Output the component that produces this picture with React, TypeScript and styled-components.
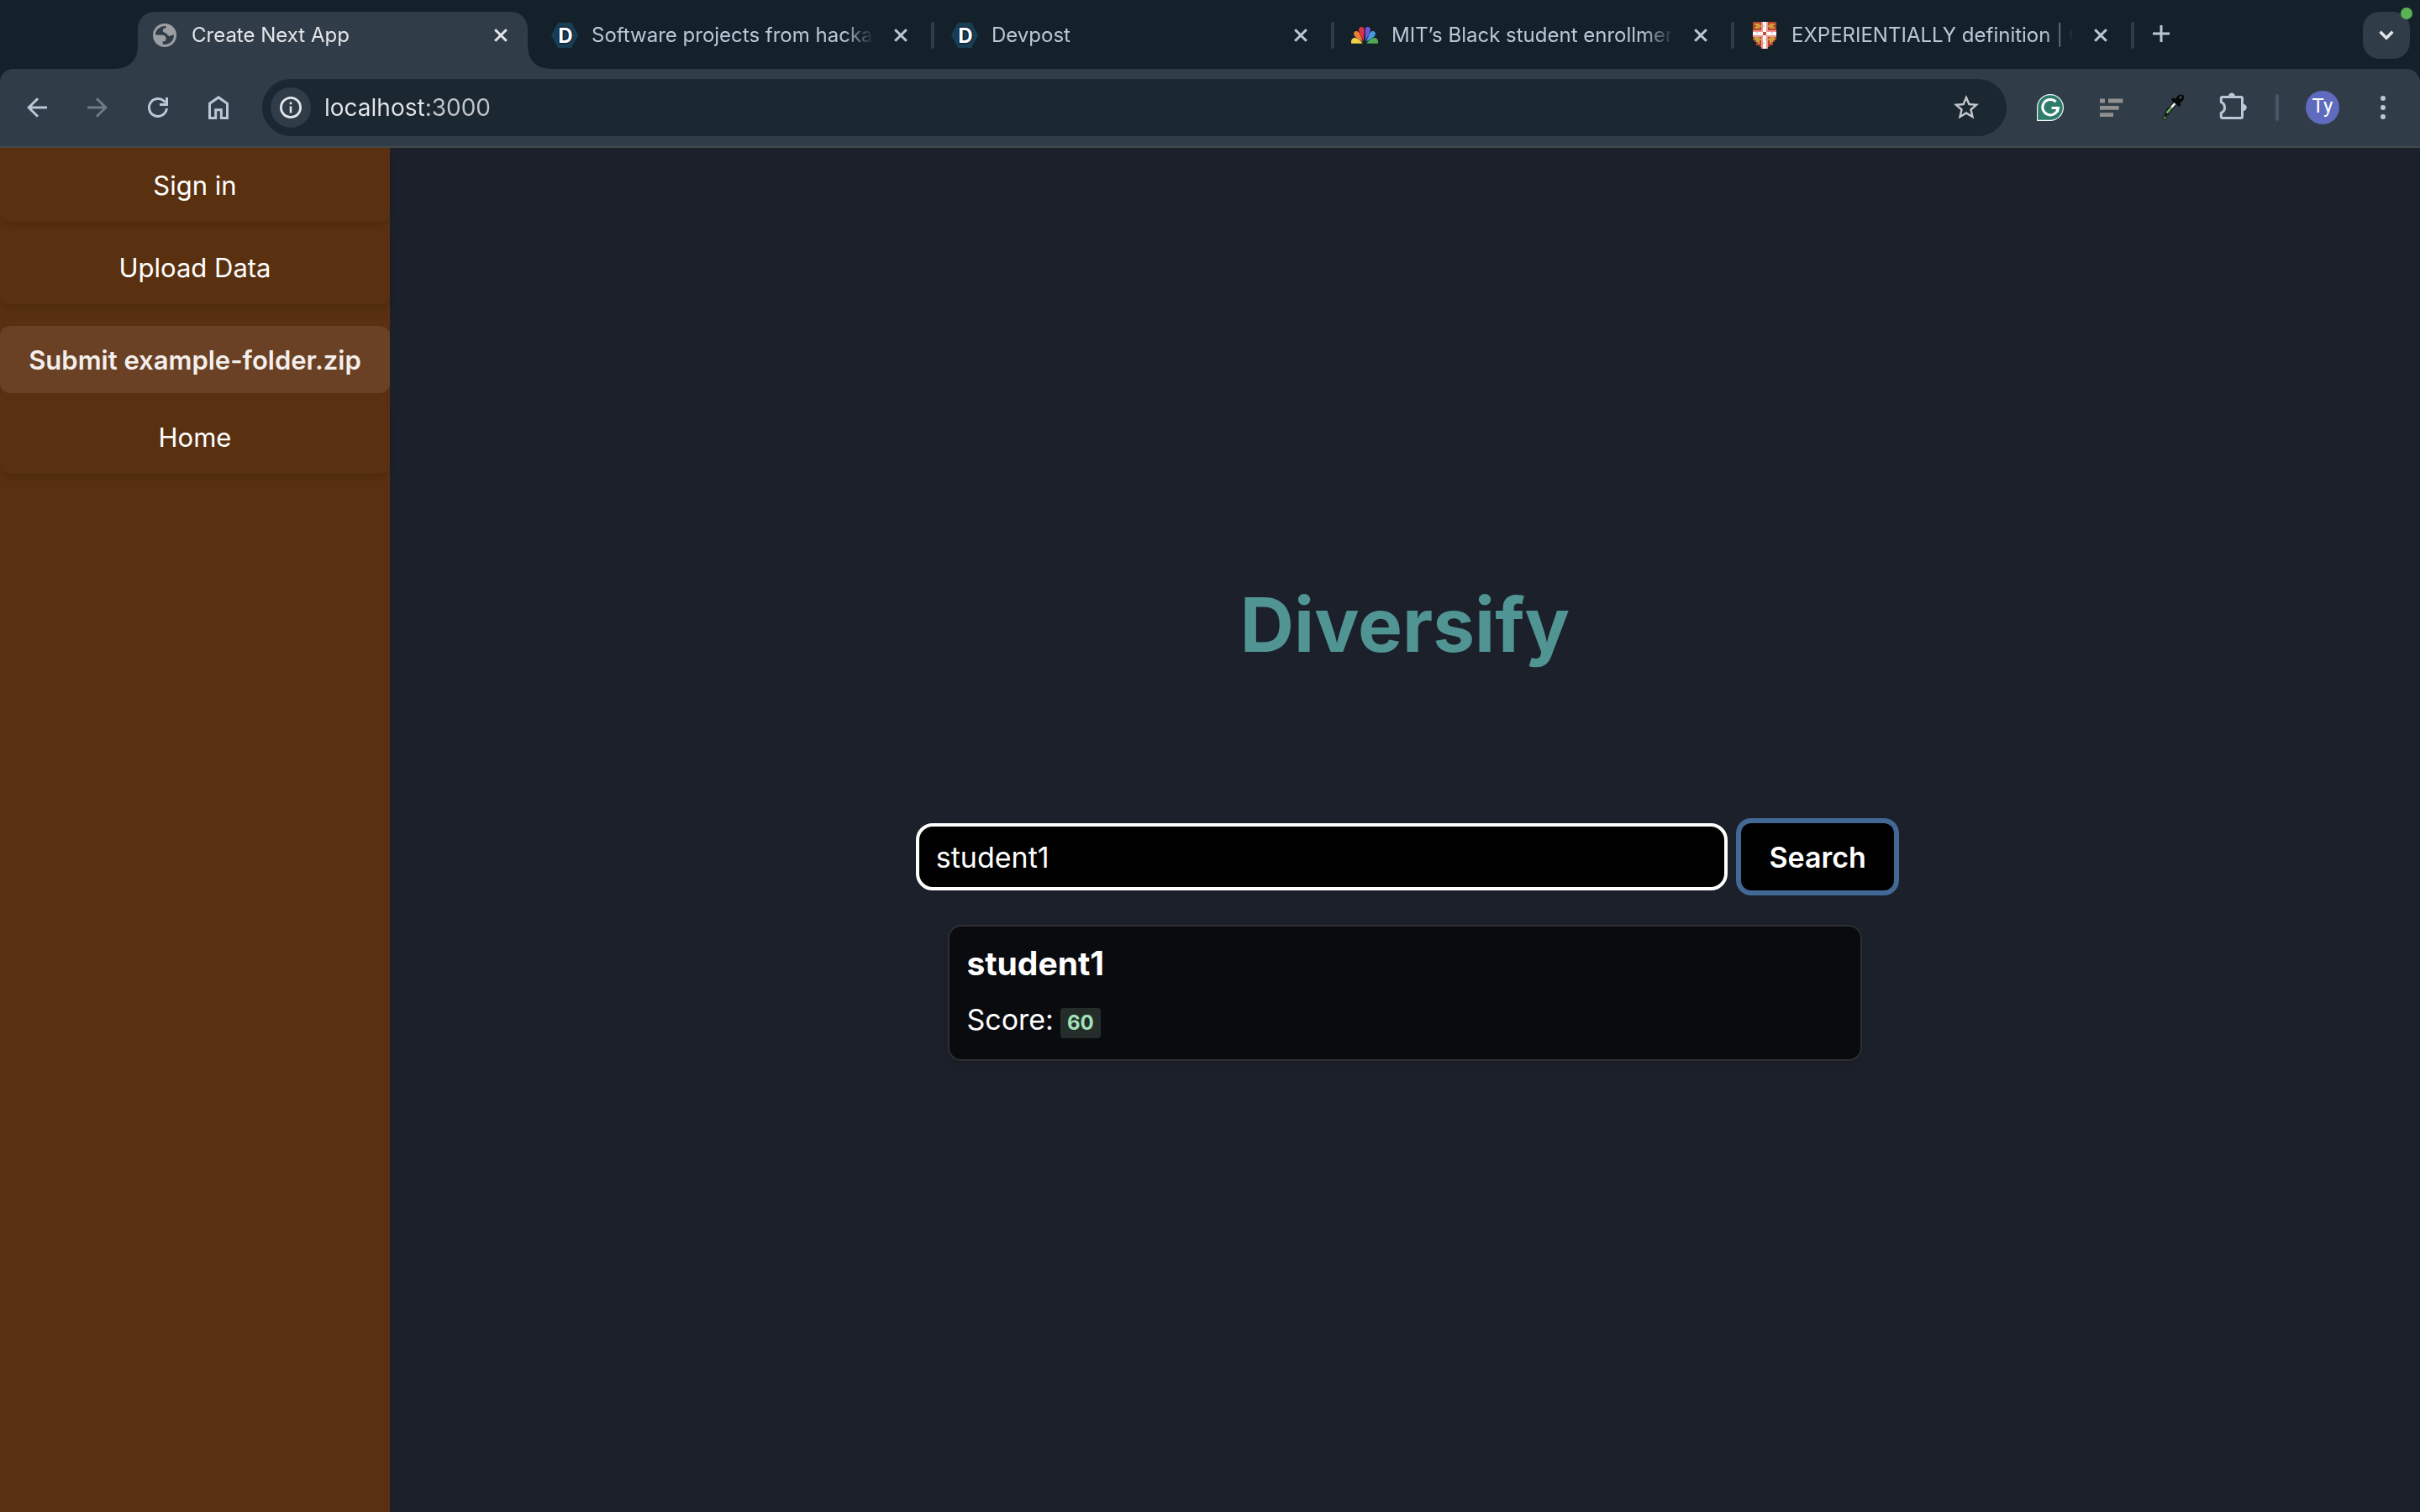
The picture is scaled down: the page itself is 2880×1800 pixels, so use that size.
import React, { useState } from "react";
import styled, { createGlobalStyle, css } from "styled-components";

const color = {
  strip: "#14212b",
  toolbar: "#303c48",
  field: "#1b2831",
  divider: "#43494c",
  icon: "#b8c8d6",
  bright: "#e3e5e8",
  page: "#1c202a",
  sidebar: "#5a3110",
  sidebarAction: "#6a4124",
  brand: "#509593",
  focus: "#426895",
};

const GlobalStyle = createGlobalStyle`
  *, *::before, *::after { box-sizing: border-box; }
  body {
    margin: 0;
    background: ${color.page};
    font-family: Inter, "Noto Sans", sans-serif;
    color: #fff;
  }
  button, input { font: inherit; color: inherit; }
  button { margin: 0; padding: 0; border: 0; background: none; cursor: pointer; }
  h1, h2, p { margin: 0; }
`;

const Window = styled.div`
  display: flex;
  flex-direction: column;
  min-height: 100vh;
`;

/* ---------- Tab strip ---------- */

const TabStrip = styled.header`
  display: flex;
  padding: 14px 12px 0 164px;
  background: ${color.strip};
`;

const TabList = styled.div`
  display: flex;
  flex: 1 1 auto;
  min-width: 0;
`;

const Tab = styled.div<{ $active?: boolean }>`
  position: relative;
  display: flex;
  align-items: center;
  gap: 16px;
  flex: 0 1 464px;
  min-width: 0;
  height: 68px;
  padding: 0 16px 12px;
  color: ${(p) => (p.$active ? color.bright : color.icon)};
  ${(p) =>
    p.$active &&
    css`
      background: ${color.toolbar};
      border-radius: 20px 20px 0 0;
      &::before,
      &::after {
        content: "";
        position: absolute;
        bottom: 0;
        width: 24px;
        height: 24px;
      }
      &::before {
        right: 100%;
        background: radial-gradient(circle at 0 0, transparent 23px, ${color.toolbar} 24px);
      }
      &::after {
        left: 100%;
        background: radial-gradient(circle at 100% 0, transparent 23px, ${color.toolbar} 24px);
      }
    `}
`;

const Favicon = styled.span`
  display: flex;
  align-items: center;
  justify-content: center;
  flex: 0 0 32px;
  height: 32px;
`;

const TabTitle = styled.button`
  flex: 1 1 auto;
  min-width: 0;
  overflow: hidden;
  text-align: left;
  white-space: nowrap;
  font-size: 24px;
  line-height: 32px;
  mask-image: linear-gradient(90deg, #000 calc(100% - 36px), transparent);
`;

const TabClose = styled.button`
  display: flex;
  align-items: center;
  justify-content: center;
  flex: 0 0 32px;
  height: 32px;
`;

const TabDivider = styled.span<{ $hidden?: boolean }>`
  flex: 0 0 4px;
  height: 32px;
  margin: 12px 4px 0;
  border-radius: 2px;
  background: ${(p) => (p.$hidden ? "transparent" : color.toolbar)};
`;

const NewTab = styled.button`
  display: flex;
  align-items: center;
  justify-content: center;
  flex: 0 0 56px;
  height: 56px;
  padding-bottom: 4px;
`;

const TabSearch = styled.button`
  position: relative;
  display: flex;
  align-items: center;
  justify-content: center;
  flex: 0 0 56px;
  height: 56px;
  border-radius: 20px;
  background: ${color.toolbar};
`;

const StatusDot = styled.span`
  position: absolute;
  top: -5px;
  right: -3px;
  width: 14px;
  height: 14px;
  border-radius: 50%;
  background: #5bb254;
`;

/* ---------- Toolbar ---------- */

const ToolbarBack = styled.div`
  background: ${color.strip};
`;

const Toolbar = styled.div`
  display: flex;
  align-items: center;
  padding: 12px 8px;
  border-bottom: 2px solid ${color.divider};
  border-radius: 16px 16px 0 0;
  background: ${color.toolbar};
`;

const ToolButton = styled.button<{ $dim?: boolean }>`
  display: flex;
  align-items: center;
  justify-content: center;
  flex: 0 0 72px;
  height: 68px;
  color: ${(p) => (p.$dim ? "#6f7b83" : color.icon)};
`;

const Omnibox = styled.form`
  display: flex;
  align-items: center;
  flex: 1 1 auto;
  min-width: 0;
  height: 68px;
  margin: 0 16px;
  padding: 0 12px 0 10px;
  border-radius: 34px;
  background: ${color.field};
`;

const SiteInfo = styled.button`
  display: flex;
  align-items: center;
  justify-content: center;
  flex: 0 0 48px;
  height: 48px;
  margin-right: 16px;
  border-radius: 50%;
  background: ${color.toolbar};
`;

const Address = styled.input`
  flex: 1 1 auto;
  min-width: 0;
  padding: 0;
  border: 0;
  outline: 0;
  font-size: 28px;
  line-height: 36px;
  background: linear-gradient(90deg, ${color.bright} 122px, #c3c6c9 122px);
  background-clip: text;
  -webkit-text-fill-color: transparent;
`;

const ToolDivider = styled.span`
  flex: 0 0 4px;
  height: 32px;
  margin: 0 16px;
  border-radius: 2px;
  background: #485765;
`;

const Avatar = styled.span`
  display: flex;
  align-items: center;
  justify-content: center;
  width: 40px;
  height: 40px;
  padding-bottom: 4px;
  border-radius: 50%;
  background: #5f6bbd;
  color: #fff;
  font-family: Roboto, sans-serif;
  font-size: 24px;
  line-height: 24px;
`;

/* ---------- Page ---------- */

const Page = styled.div`
  display: flex;
  flex: 1 1 auto;
`;

const Sidebar = styled.nav`
  display: flex;
  flex-direction: column;
  flex: 0 0 464px;
  background: ${color.sidebar};
`;

const NavLink = styled.a<{ $before?: number }>`
  display: flex;
  align-items: center;
  justify-content: center;
  height: 88px;
  margin-top: ${(p) => p.$before ?? 0}px;
  padding-top: 2px;
  border-radius: 12px;
  box-shadow: 0 8px 12px -2px rgba(0, 0, 0, 0.1), 0 4px 8px -2px rgba(0, 0, 0, 0.06);
  background: ${color.sidebar};
  color: #fff;
  font-size: 31px;
  line-height: 40px;
  text-decoration: none;
`;

const SubmitButton = styled.button`
  height: 80px;
  margin-top: 26px;
  padding-top: 2px;
  border-radius: 12px;
  background: ${color.sidebarAction};
  color: #f4efec;
  font-size: 31px;
  font-weight: 600;
  line-height: 40px;
`;

const Main = styled.main`
  display: flex;
  flex-direction: column;
  align-items: center;
  justify-content: center;
  flex: 1 1 auto;
  min-width: 0;
  padding-bottom: 27px;
`;

const Title = styled.h1`
  margin-bottom: 178px;
  color: ${color.brand};
  font-size: 89px;
  font-weight: 700;
  line-height: 116px;
`;

const SearchForm = styled.form`
  display: flex;
  justify-content: center;
  gap: 16px;
  width: 100%;
  margin-bottom: 41px;
`;

const SearchInput = styled.input`
  width: 40%;
  height: 80px;
  padding: 0 20px;
  border: 4px solid #fff;
  border-radius: 20px;
  outline: 0;
  background: #000;
  font-size: 34px;
`;

const SearchButton = styled.button`
  min-width: 182px;
  height: 80px;
  padding: 0 32px;
  border-radius: 12px;
  background: #000;
  box-shadow: 0 0 0 6px ${color.focus};
  font-size: 34px;
  font-weight: 600;
`;

const ResultCard = styled.article`
  display: flex;
  flex-direction: column;
  gap: 16px;
  width: 45%;
  padding: 20px;
  border: 2px solid #2d2f33;
  border-radius: 16px;
  background: #0a0b0f;
  box-shadow: 0 8px 12px -2px rgba(0, 0, 0, 0.1);
`;

const ResultName = styled.h2`
  font-size: 39px;
  font-weight: 700;
  line-height: 48px;
`;

const ScoreLine = styled.p`
  display: flex;
  align-items: baseline;
  gap: 8px;
  font-size: 34px;
  line-height: 54px;
`;

const ScoreBadge = styled.strong`
  padding: 0 8px;
  border-radius: 4px;
  background: #252d2b;
  color: #a3e3b8;
  font-size: 24px;
  font-weight: 700;
  line-height: 36px;
`;

/* ---------- Icons ---------- */

const CloseIcon = () => (
  <svg width="16" height="16" viewBox="0 0 16 16" stroke="currentColor" strokeWidth="3" fill="none">
    <path d="M1.2 1.2 14.8 14.8M14.8 1.2 1.2 14.8" />
  </svg>
);

const PlusIcon = () => (
  <svg width="20" height="20" viewBox="0 0 20 20" stroke={color.icon} strokeWidth="3">
    <path d="M10 0V20M0 10H20" />
  </svg>
);

const ChevronIcon = () => (
  <svg width="18" height="12" viewBox="0 0 18 12" stroke={color.bright} strokeWidth="3.6" fill="none">
    <path d="M1.6 1.8 9 9.2 16.4 1.8" />
  </svg>
);

const BackIcon = () => (
  <svg width="24" height="24" viewBox="0 0 24 24" stroke="currentColor" strokeWidth="3" fill="none">
    <path d="M13 1.2 2.2 12 13 22.8M2 12H24" />
  </svg>
);

const ForwardIcon = () => (
  <svg width="24" height="24" viewBox="0 0 24 24" stroke="currentColor" strokeWidth="3" fill="none">
    <path d="M11 1.2 21.8 12 11 22.8M22 12H0" />
  </svg>
);

const ReloadIcon = () => (
  <svg width="24" height="24" viewBox="0 0 24 24" stroke="currentColor" strokeWidth="3" fill="none">
    <path d="M22.4 13.2A10.5 10.5 0 1 1 20.6 6" />
    <path d="M22.5 0V8.5H14" />
  </svg>
);

const HomeIcon = () => (
  <svg width="24" height="28" viewBox="0 0 24 28" stroke="currentColor" strokeWidth="3" fill="none">
    <path d="M1.5 9.2 12 1.9 22.5 9.2V26.4H15.3V16.8H8.7V26.4H1.5Z" />
  </svg>
);

const InfoIcon = () => (
  <svg width="26" height="26" viewBox="0 0 26 26" fill="none" stroke={color.bright}>
    <circle cx="13" cy="13" r="11.6" strokeWidth="2.8" />
    <path d="M13 11.6V19.4M13 6.4V9.2" strokeWidth="2.6" />
  </svg>
);

const StarIcon = () => (
  <svg width="36" height="36" viewBox="0 0 24 24" fill="#c4c7cb">
    <path d="M22 9.24l-7.19-.62L12 2 9.19 8.63 2 9.24l5.46 4.73L5.82 21 12 17.27 18.18 21l-1.63-7.03L22 9.24zM12 15.4l-3.76 2.27 1-4.28-3.32-2.88 4.38-.38L12 6.1l1.71 4.04 4.38.38-3.32 2.88 1 4.28L12 15.4z" />
  </svg>
);

const GlobeIcon = () => (
  <svg width="28" height="28" viewBox="0 0 28 28">
    <circle cx="14" cy="14" r="14" fill="#9b9fa3" />
    <g fill={color.toolbar}>
      <path d="M2.9 13.6C3.1 8 8 2.9 15.6 3.1L15.2 5.6 12.4 6.4Q11 8 12.4 9.6L14.6 10.4Q16.4 12 18 14.2 20 15.8 22 14L25 13.4C25.2 20.4 19.4 25.8 11.6 24.8V21.4L14.6 21Q16.2 19.6 15.6 17.6 15 14 11 13.8Z" />
    </g>
    <path d="M12.4 6.4 15.2 5.6 18 9 14.6 11.6 12 9.4Z" fill="#9b9fa3" />
  </svg>
);

const DevpostIcon = () => (
  <svg width="32" height="30" viewBox="0 0 32 30">
    <path d="M8 0H24L32 15 24 30H8L0 15Z" fill="#183e54" />
    <text
      x="17"
      y="23.5"
      textAnchor="middle"
      fontFamily="Inter, sans-serif"
      fontSize="24"
      fontWeight="700"
      fill="#fff"
      stroke="#0d2740"
      strokeWidth="3"
      paintOrder="stroke"
    >
      D
    </text>
  </svg>
);

const sidePetal = "M.2 19.8C-.8 15.6 1.4 12.6 5 13 8.8 13.8 11.6 16.6 13.6 19.8Z";
const midPetal = "M3.2 9.2C2.6 6.4 4.4 4.8 6.8 5 9.8 5.4 11.6 11.6 14 18 10.4 14.6 4.2 12.8 3.2 9.2Z";
const topPetal = "M9 3.8C9 1.4 10.4.1 12.4.1 14.4.1 15.5 1.6 15.5 3.8L14.9 17C12.6 12.8 9.2 7 9 3.8Z";

const PeacockIcon = () => (
  <svg width="32" height="20" viewBox="0 0 32 20">
    <path d={sidePetal} fill="#f3d046" />
    <path d={midPetal} fill="#ee7c33" />
    <path d={topPetal} fill="#dd3349" />
    <g transform="matrix(-1 0 0 1 32 0)">
      <path d={sidePetal} fill="#50ab4f" />
      <path d={midPetal} fill="#459be0" />
      <path d={topPetal} fill="#6f55d3" />
    </g>
  </svg>
);

const ShieldIcon = () => (
  <svg width="28" height="32" viewBox="0 0 14 16" shapeRendering="crispEdges">
    <path d="M0 0H14V11H13V12H12V14H10V15H9V16H5V15H4V14H2V12H1V11H0Z" fill="#b8432c" />
    <path
      d="M1 1H4V2H5V3H4V4H1V3H2V2H1ZM10 1H13V2H12V3H13V4H10V3H9V2H10ZM1 9H4V10H5V11H4V13H3V12H2V11H1ZM10 9H13V11H12V12H11V13H10V11H9V10H10Z"
      fill="#caa13c"
    />
    <path d="M5 0H9V5H14V9H9V16H5V9H0V5H5Z" fill="#f0958c" />
    <path d="M6 0H8V6H14V8H8V16H6V8H0V6H6Z" fill="#fafafa" />
    <path d="M6 6H8V8H6Z" fill="#d04a30" />
    <path d="M2 6H3V7H2ZM11 6H12V7H11ZM6 2H7V3H6ZM7 10H8V11H7ZM6 12H7V13H6Z" fill="#cfd3d6" />
  </svg>
);

const GrammarlyIcon = () => (
  <svg width="32" height="32" viewBox="0 0 32 32" fill="none">
    <path d="M.6 31.4V16A15.4 15.4 0 1 1 16 31.4Z" fill="#2f7c6c" stroke="#f2f6f5" strokeWidth="1.2" />
    <path d="M22.6 9.2A9.2 9.2 0 1 0 25.2 16.6H17.6M21.6 16.8 25.4 16.6 24.4 21.4" stroke="#fff" strokeWidth="3" />
  </svg>
);

const LinesIcon = () => (
  <svg width="32" height="32" viewBox="0 0 32 32" fill="#918f8f">
    <path d="M3 5.6H9V10.4H3ZM13 5.6H30.4V10.4H13ZM3 14H25.6V18.8H3ZM3 22.2H19V27H3Z" />
  </svg>
);

const DropperIcon = () => (
  <svg width="32" height="32" viewBox="0 0 32 32">
    <path d="M21.6 9.8 12.4 20 10.8 23" stroke="#0b0d0f" strokeWidth="5" strokeLinecap="round" fill="none" />
    <path d="M20.6 11 16 16" stroke="#f2f4f2" strokeWidth="2.8" />
    <path d="M16.4 15.6 10.6 22.6" stroke="#6bb368" strokeWidth="2.8" />
    <ellipse cx="26" cy="5.6" rx="6" ry="4.2" transform="rotate(-45 26 5.6)" fill="#08090a" />
    <path d="M18.4 6.6 25.4 12.4" stroke="#08090a" strokeWidth="4" strokeLinecap="round" />
    <ellipse cx="27" cy="4" rx="1.6" ry="1" transform="rotate(-45 27 4)" fill="#5c6166" />
    <path d="M8.4 24.4Q11.2 26.6 10.8 28.6 10 31 8 31 5.6 31 5.6 28.6 5.8 26.6 8.4 24.4Z" fill="#142016" />
    <circle cx="8.2" cy="28.2" r="1.5" fill="#4f9a52" />
  </svg>
);

const PuzzleIcon = () => (
  <svg width="36" height="36" viewBox="-2 2 36 36">
    <path
      d="M3.3 9Q3.3 7.5 4.8 7.5H27Q28.5 7.5 28.5 9V31Q28.5 32.5 27 32.5H4.8Q3.3 32.5 3.3 31V26.3A6.8 6.8 0 0 0 3.3 13.7Z"
      fill="none"
      stroke="currentColor"
      strokeWidth="3"
      strokeLinejoin="round"
    />
    <path d="M12 7A4 4.6 0 0 1 20 7ZM29 15.8A4.8 4.2 0 0 1 29 24.2Z" fill="currentColor" />
  </svg>
);

const MenuIcon = () => (
  <svg width="8" height="28" viewBox="0 0 8 28" fill="currentColor">
    <circle cx="4" cy="3" r="3" />
    <circle cx="4" cy="14" r="3" />
    <circle cx="4" cy="25" r="3" />
  </svg>
);

const tabs = [
  { title: "Create Next App", icon: <GlobeIcon />, active: true },
  { title: "Software projects from hackathons", icon: <DevpostIcon /> },
  { title: "Devpost", icon: <DevpostIcon /> },
  { title: "MIT’s Black student enrollment", icon: <PeacockIcon /> },
  { title: "EXPERIENTIALLY definition | Cambridge", icon: <ShieldIcon /> },
];

export default function App() {
  const [address, setAddress] = useState("localhost:3000");
  const [query, setQuery] = useState("student1");
  const stay = (e: React.FormEvent) => e.preventDefault();

  return (
    <Window>
      <GlobalStyle />
      <TabStrip>
        <TabList>
          {tabs.map((tab) => (
            <React.Fragment key={tab.title}>
              <Tab $active={tab.active}>
                <Favicon>{tab.icon}</Favicon>
                <TabTitle>{tab.title}</TabTitle>
                <TabClose aria-label={`Close ${tab.title}`}>
                  <CloseIcon />
                </TabClose>
              </Tab>
              <TabDivider $hidden={tab.active} />
            </React.Fragment>
          ))}
          <NewTab aria-label="New tab">
            <PlusIcon />
          </NewTab>
        </TabList>
        <TabSearch aria-label="Search tabs">
          <ChevronIcon />
          <StatusDot />
        </TabSearch>
      </TabStrip>

      <ToolbarBack>
        <Toolbar>
          <ToolButton aria-label="Back"><BackIcon /></ToolButton>
          <ToolButton aria-label="Forward" $dim><ForwardIcon /></ToolButton>
          <ToolButton aria-label="Reload"><ReloadIcon /></ToolButton>
          <ToolButton aria-label="Home page"><HomeIcon /></ToolButton>
          <Omnibox onSubmit={stay}>
            <SiteInfo type="button" aria-label="Site information"><InfoIcon /></SiteInfo>
            <Address aria-label="Address" value={address} onChange={(e) => setAddress(e.target.value)} />
            <ToolButton type="button" aria-label="Bookmark"><StarIcon /></ToolButton>
          </Omnibox>
          <ToolButton aria-label="Grammarly"><GrammarlyIcon /></ToolButton>
          <ToolButton aria-label="Outline"><LinesIcon /></ToolButton>
          <ToolButton aria-label="Color picker"><DropperIcon /></ToolButton>
          <ToolButton aria-label="Extensions"><PuzzleIcon /></ToolButton>
          <ToolDivider />
          <ToolButton aria-label="Profile"><Avatar>Ty</Avatar></ToolButton>
          <ToolButton aria-label="Menu"><MenuIcon /></ToolButton>
        </Toolbar>
      </ToolbarBack>

      <Page>
        <Sidebar>
          <NavLink href="#sign-in">Sign in</NavLink>
          <NavLink href="#upload" $before={10}>Upload Data</NavLink>
          <SubmitButton>Submit example-folder.zip</SubmitButton>
          <NavLink href="#home" $before={8}>Home</NavLink>
        </Sidebar>
        <Main>
          <Title>Diversify</Title>
          <SearchForm onSubmit={stay}>
            <SearchInput aria-label="Student name" value={query} onChange={(e) => setQuery(e.target.value)} />
            <SearchButton>Search</SearchButton>
          </SearchForm>
          <ResultCard>
            <ResultName>student1</ResultName>
            <ScoreLine>
              Score: <ScoreBadge>60</ScoreBadge>
            </ScoreLine>
          </ResultCard>
        </Main>
      </Page>
    </Window>
  );
}
